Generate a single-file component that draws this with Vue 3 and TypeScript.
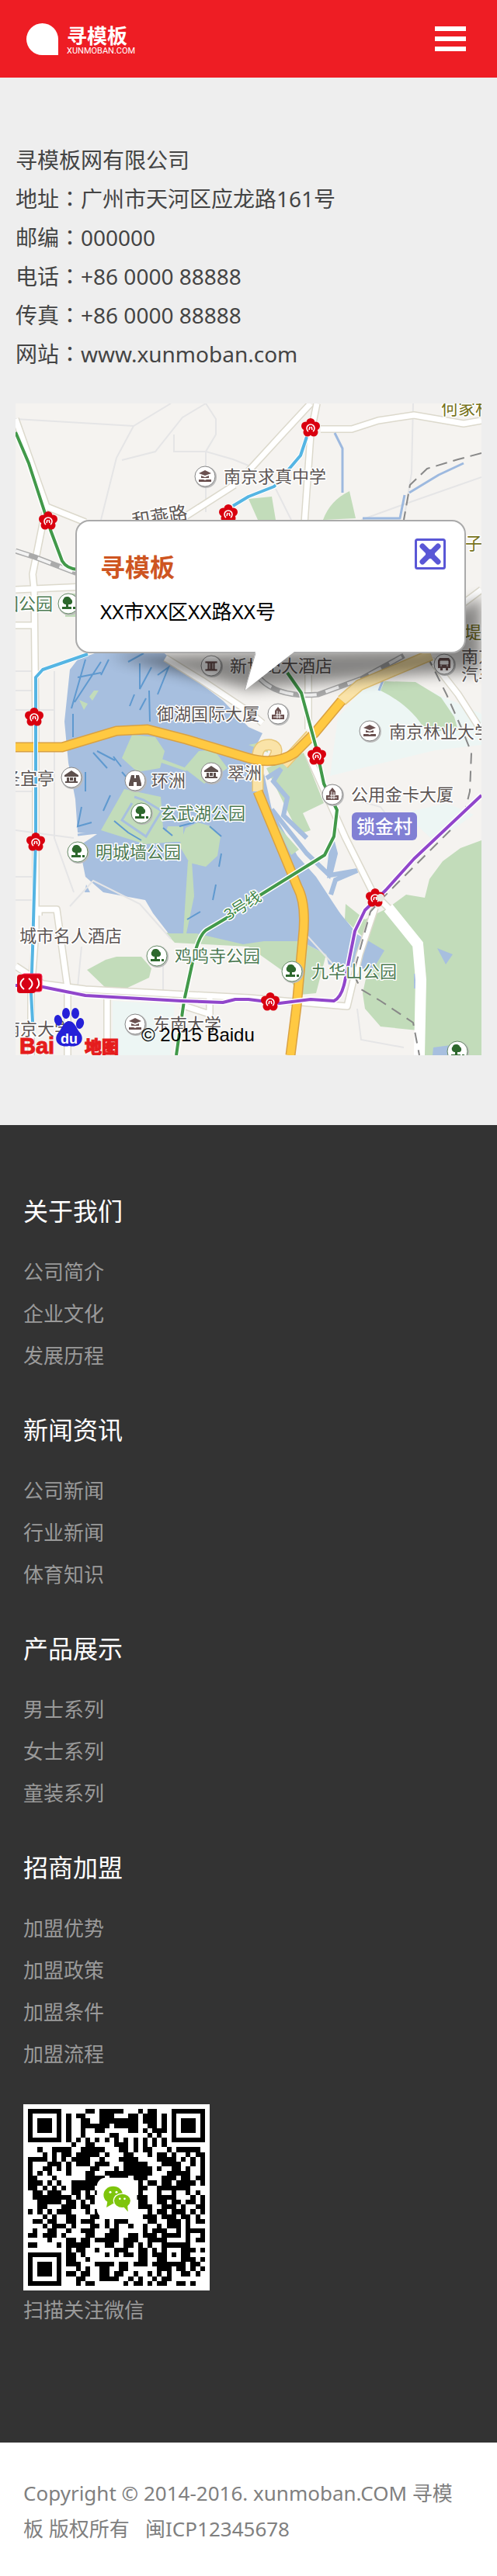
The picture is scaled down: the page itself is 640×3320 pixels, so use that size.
<script setup lang="ts">
import { ref } from 'vue'

interface Contact { label: string; value: string }
interface LinkGroup { title: string; links: string[] }
interface Poi { kind: string; x: number; y: number }
interface MapLabel { text: string; x: number; y: number; tone?: string; angle?: number }

const popupOpen = ref(true)
const menuOpen = ref(false)

const contacts: Contact[] = [
  { label: '地址', value: '广州市天河区应龙路161号' },
  { label: '邮编', value: '000000' },
  { label: '电话', value: '+86 0000 88888' },
  { label: '传真', value: '+86 0000 88888' },
  { label: '网站', value: 'www.xunmoban.com' },
]

const groups: LinkGroup[] = [
  { title: '关于我们', links: ['公司简介', '企业文化', '发展历程'] },
  { title: '新闻资讯', links: ['公司新闻', '行业新闻', '体育知识'] },
  { title: '产品展示', links: ['男士系列', '女士系列', '童装系列'] },
  { title: '招商加盟', links: ['加盟优势', '加盟政策', '加盟条件', '加盟流程'] },
]

const stations: number[][] = [
  [42, 151], [274, 142], [24, 404], [380, 31], [26, 565], [388, 454], [463, 637], [328, 771],
]

const pois: Poi[] = [
  { kind: 'school', x: 244, y: 94 }, { kind: 'hotel', x: 252, y: 338 },
  { kind: 'bus', x: 552, y: 336 }, { kind: 'tower', x: 338, y: 400 },
  { kind: 'school', x: 456, y: 422 }, { kind: 'hall', x: 72, y: 482 },
  { kind: 'view', x: 154, y: 486 }, { kind: 'hall', x: 252, y: 476 },
  { kind: 'park', x: 162, y: 528 }, { kind: 'park', x: 80, y: 578 },
  { kind: 'tower', x: 408, y: 504 }, { kind: 'park', x: 182, y: 712 },
  { kind: 'park', x: 356, y: 732 }, { kind: 'school', x: 154, y: 800 },
  { kind: 'park', x: 569, y: 835 }, { kind: 'park', x: 68, y: 258 },
]

const labels: MapLabel[] = [
  { text: '南京求真中学', x: 268, y: 94 },
  { text: '和燕路', x: 150, y: 152, angle: -9, tone: 'road' },
  { text: '新世纪大酒店', x: 276, y: 338 },
  { text: '御湖国际大厦', x: 182, y: 400 },
  { text: '南京林业大学', x: 481, y: 423 },
  { text: '圣宜亭', x: -16, y: 483 },
  { text: '环洲', x: 175, y: 486 },
  { text: '翠洲', x: 273, y: 476 },
  { text: '玄武湖公园', x: 186, y: 528, tone: 'park' },
  { text: '明城墙公园', x: 103, y: 578, tone: 'park' },
  { text: '公用金卡大厦', x: 432, y: 504 },
  { text: '城市名人酒店', x: 5, y: 686 },
  { text: '鸡鸣寺公园', x: 205, y: 712, tone: 'park' },
  { text: '九华山公园', x: 381, y: 732, tone: 'park' },
  { text: '东南大学', x: 177, y: 800 },
  { text: '南京大学', x: -16, y: 806 },
  { text: '国公园', x: -18, y: 258, tone: 'park' },
  { text: '3号线', x: 270, y: 660, tone: 'line', angle: -32 },
  { text: '何家村', x: 548, y: 6, tone: 'area' },
  { text: '子', x: 579, y: 180, tone: 'area' },
  { text: '堤锁', x: 578, y: 295, tone: 'area' },
  { text: '南京', x: 574, y: 326 },
  { text: '汽车', x: 574, y: 349 },
]

const casedRoads: string[] = [
  'M0 20L40 133L90 153', 'M38 140L22 220L24 240L26 420V680L20 760V840',
  'M0 240L90 236', 'M0 286H25', 'M215 148L282 105', 'M380 0L343 40L300 87',
  'M388 0L380 40L372 155', 'M393 33H433L467 22L513 15L577 26L600 22',
  'M193 328L240 357L300 397L318 412', 'M377 453L425 560L460 630L480 650L520 697L524 743L520 840',
  'M463 650L443 710L427 777L300 766L90 755L35 748L0 725', 'M30 660V652H53L67 753V840',
  'M118 765V840', 'M213 775L250 787V765', 'M600 240L560 270', 'M377 350V420',
  'M535 330L570 375L600 422',
]
const minorRoads: string[] = [
  'M0 20L152 29L200 0', 'M152 29L130 70L110 150', 'M137 73L180 62L215 18L245 0L258 20V40L245 62L280 72L300 80',
  'M204 40V62H245V140', 'M512 0L510 90L500 150', 'M335 110L355 150', 'M445 150L500 130L600 95',
  'M50 345V560L75 630', 'M0 500H30', 'M0 550L75 560', 'M0 610H30', 'M0 640H30',
  'M70 648L100 615L160 645L200 690', 'M85 700L80 752', 'M190 700L190 760',
  'M370 680L420 735', 'M440 780L445 820L500 830', 'M435 510L470 520L500 560', 'M0 345H25M0 370H25M0 395H50V345',
]

const qrRows: string[] = [
  '0000000000001101111100010110000000000', '0000000010110001110001101110100000000',
  '0000000010011001111111101110100000000', '0000000010011111101111100110100000000',
  '0000000010010011000001101011100000000', '0000000010010000011000000101000000000',
  '0000000010101010101010101010100000000', '0000000001001100001110101010100000000',
  '0010011110011111000110101100010111110', '0001010110111110100011000101101001011',
  '1111010101111001000111100001111010101', '1000111010111011100011111000111100101',
  '1001101010000110001011111101001101001', '1010100010001100111111111100011111001',
  '1100010000001111011110111000111011011', '1110101001111111000000010110110111101',
  '1101010101111100000000011001111111000', '0110111001101010000000010001001001010',
  '0111111110101100000000111001111000101', '0011111011010100000000011001101101101',
  '0011000111011000000000011100111010011', '1010101110001010000000000101101110101',
  '0001010011000110000000001110111011010', '0110110011011100101110000110011101011',
  '0001011101000110101001001001011101000', '0100110010011100011000001011100101111',
  '1101110100001100111001101110111101001', '0000100011011011111011100111100001011',
  '1100001011111000110011010100111111000', '0000000010110010001110011010100011101',
  '0000000011010000101011011011101011000', '0000000011001000000000011001111011101',
  '0000000011100011110110111011111110110', '0000000000101001100110000001110110101',
  '0000000011011001101100100101010011010', '0000000000110001111001010010110000000',
  '0000000000101100000010110101100110100',
]
const qrPath = qrRows
  .map((row, y) => [...row].map((cell, x) => (cell === '1' ? `M${x} ${y}h1v1h-1z` : '')).join(''))
  .join('')
</script>

<template>
  <div class="page">
    <header class="topbar">
      <a class="brand" href="#" aria-label="寻模板">
        <svg class="brand-mark" viewBox="0 0 41 41" aria-hidden="true">
          <path d="M20.500 0A20.500 20.500 0 0 1 41 20.500V41H20.500A20.500 20.500 0 0 1 20.500 0Z" fill="#fff" />
        </svg>
        <span class="brand-text">
          <strong>寻模板</strong>
          <small>XUNMOBAN.COM</small>
        </span>
      </a>
      <button class="menu" type="button" aria-label="菜单" :aria-expanded="menuOpen" @click="menuOpen = !menuOpen">
        <i></i><i></i><i></i>
      </button>
    </header>

    <main class="content">
      <section class="contact">
        <p>寻模板网有限公司</p>
        <p v-for="item in contacts" :key="item.label">{{ item.label }}<span class="colon">：</span>{{ item.value }}</p>
      </section>

      <section class="map">
        <svg class="map-art" viewBox="0 0 600 840" preserveAspectRatio="xMidYMid slice">
          <defs>
            <filter id="soft" x="-20%" y="-50%" width="140%" height="200%"><feGaussianBlur stdDeviation="9" /></filter>
            <g id="flower">
              <g fill="#d9000f">
                <circle cy="-6.500" r="5.500" /><circle cx="6.500" cy="-2" r="5.500" /><circle cx="4" cy="6" r="5.500" />
                <circle cx="-4" cy="6" r="5.500" /><circle cx="-6.500" cy="-2" r="5.500" /><circle r="6" />
              </g>
              <path d="M-3 5A5 5 0 1 1 3 5M-2 3L-1 -1M2 3L1 -1" fill="none" stroke="#fff" stroke-width="1.600" />
            </g>
            <g id="school"><path d="M-8 -4L0 -8L8 -4L0 -1ZM-5 -1L0 1L5 -1V2H-5ZM-8 4H-2L0 5L2 4H8V7H-8Z" fill="#6b5150" /></g>
            <g id="hotel"><path d="M-8 -6H8V-3H5V4H8V7H-8V4H-5V-3H-8ZM-2 -3V4M2 -3V4" fill="#6b5150" stroke="#fff" stroke-width=".8" /></g>
            <g id="bus"><path d="M-6 -8H6L8 -5V5H5V8H2V5H-2V8H-5V5H-8V-5Z" fill="#6b5150" /><path d="M-5 -4H5V0H-5ZM-5 2H-3M3 2H5" fill="#fff" stroke="#fff" /></g>
            <g id="tower"><path d="M-8 7V1H-4V-4L0 -9L4 -4V1H8V7Z" fill="#6b5150" /><path d="M-1 -4V6M2 -3V6M-6 4H6M-3 1H4" stroke="#fff" stroke-width="1" /></g>
            <g id="hall"><path d="M-9 -3L0 -9L9 -3V-1H-9ZM-6 0H-3V5H-6ZM3 0H6V5H3ZM-8 5H8V7H-8ZM-2 0H2V4H-2Z" fill="#5e504d" /></g>
            <g id="view"><path d="M-5 -7H-1V-3H1V-7H5L8 4V7H2V2H-2V7H-8V4Z" fill="#5e504d" /></g>
            <g id="park"><path d="M-2 -9C2 -9 3 -7 3 -6C6 -5 6 1 2 1H0V4H4V7H-8V4H-3V1C-8 1 -8 -5 -6 -6C-6 -8 -4 -9 -2 -9ZM6 4H9V7H6Z" fill="#2d682d" /></g>
          </defs>

          <rect width="600" height="840" fill="#f5f3f0" />
          <g fill="#edf6f4">
            <path d="M415 405L450 365L510 360L600 400V440L540 447L433 473L405 480Z" />
            <path d="M125 770L205 775L200 840H125Z" /><path d="M500 528L555 515L590 530L540 565Z" />
          </g>
          <g fill="#c2dcba">
            <path d="M300 123L330 120L335 150H312ZM396 150Q405 125 430 113L438 148Z" />
            <path d="M475 358L515 359L548 379L565 404L570 422H528Q510 390 470 370Z" />
            <path d="M600 563L573 573L550 590L533 613L527 637L503 633L480 650L450 665L425 645L424 665L460 700L447 760L450 780L470 803L518 808L520 840H600Z" />
            <path d="M323 470L371 450L397 515L370 528L380 550L365 555Z" />
            <path d="M116 717L130 713H162L175 728L172 740L140 755H118L92 730Z" />
            <path d="M64 245H82V275H64Z" />
            <path d="M193 682L250 683L320 693L367 693L400 710L387 760L367 762L345 732L300 700L205 695Z" />
          </g>
          <path d="M70 343L80 330L113 318H187L233 357L267 383L300 417L318 425L303 455L312 500L320 477L330 523L363 583L387 610L433 680L450 690L475 705L460 730L403 723L400 710L367 693H320L293 697L233 683H197L177 657L167 640L113 630L90 610L82 570L105 555L80 553L77 510L68 463L63 410Z" fill="#a7bfdf" />
          <path d="M323 483L342 471L332 487L350 508L345 531L375 560M330 523L375 580L403 607L408 565L412 580L405 608L440 602L412 614L406 633" fill="none" stroke="#a7bfdf" stroke-width="6" />
          <path d="M543 702L563 710L554 723ZM538 830L575 825V840H537ZM513 735H518V754H513ZM91 620L96 630H89Z" fill="#a7bfdf" />
          <g fill="#c2dcba">
            <path d="M150 427L180 430L192 448L186 470L157 475L137 457ZM217 470L236 448L255 446L273 470L243 490Z" />
            <path d="M140 497L187 507L190 548L205 565L167 568L110 550ZM196 545H216V565H190Z" />
            <path d="M219 547L235 540L252 545L264 558L260 583L245 597L224 592L211 570Z" />
            <path d="M222 590H227L230 635L220 683H216L219 635ZM188 458L220 470V474L185 462ZM82 382L93 387L88 395ZM101 370H107L99 383L95 378ZM300 440L325 435V450Z" />
            <path d="M334 540L365 575L355 582Z" />
          </g>
          <path d="M153 507L165 511L188 525L168 558L137 537L150 515M385 620L435 680M105 553L80 556" fill="none" stroke="#a7bfdf" stroke-width="3" />
          <path d="M80 353L110 347M110 333L76 385M90 330L72 393M120 330L110 350M145 333L165 322M160 335V368L175 340M183 350L197 340L183 375M172 370L173 410M153 375L147 390M168 380L160 395M74 400V430M100 450L118 470M105 448L128 460M126 455L136 468M137 475L150 490M85 520L80 545L98 540M113 525L122 505M127 538L145 553L162 563M190 547L202 557M211 545L230 540M250 545L265 558M265 580L262 597M258 620L254 640M221 665L238 655M90 475V500" fill="none" stroke="#5f99cf" stroke-width="2" />

          <g fill="none" stroke="#e5e5e6" stroke-width="2"><path v-for="d in minorRoads" :key="d" :d="d" /></g>
          <g fill="none" stroke="#dcd9cc" stroke-width="10" stroke-linejoin="round"><path v-for="d in casedRoads" :key="d" :d="d" /></g>
          <g fill="none" stroke="#fff" stroke-width="7" stroke-linejoin="round"><path v-for="d in casedRoads" :key="d" :d="d" /></g>
          <path d="M480 650L518 697L522 743L520 840" fill="none" stroke="#fff" stroke-width="14" />
          <g fill="none" stroke-linejoin="round">
            <path d="M0 190L25 198L90 223M315 355Q340 380 390 375L445 355L500 325" stroke="#aaa" stroke-width="7" />
            <path d="M0 190L25 198L90 223M315 355Q340 380 390 375L445 355L500 325" stroke="#f3f3f3" stroke-width="4" stroke-dasharray="18 12" />
            <path d="M600 64L570 72L530 84L508 105L500 150" stroke="#888" stroke-width="2" stroke-dasharray="15 8" />
            <path d="M530 325L555 375L575 420L587 450L585 500L580 520M560 550L475 635L457 655L435 735L445 755L470 770L512 798L520 840" stroke="#888" stroke-width="2" stroke-dasharray="14 9" />
            <path d="M411 38L421 58V115M447 148H495L501 118M507 115L545 92L577 77M468 370L475 352" stroke="#9db9df" stroke-width="3" />
            <path d="M312 500V462Q309 438 329 440Q342 443 331 460M345 465L380 427M420 383L443 363L535 324" stroke="#e8c779" stroke-width="15" />
            <path d="M312 500V462Q309 438 329 440Q342 443 331 460M345 465L380 427M420 383L443 363L535 324" stroke="#fae3a8" stroke-width="12" />
            <path d="M0 443H60L130 422L170 420L220 433L300 457Q335 467 360 450L385 425L420 383M312 500L363 623Q375 645 370 690L362 777L354 840" stroke="#d9a142" stroke-width="13" />
            <path d="M0 443H60L130 422L170 420L220 433L300 457Q335 467 360 450L385 425L420 383M312 500L363 623Q375 645 370 690L362 777L354 840" stroke="#ffc942" stroke-width="10" />
            <path d="M93 323L35 343L26 353V560L22 703L20 760L22 797M375 43L367 67L333 107L300 120L280 132" stroke="#fff" stroke-width="6" />
            <path d="M93 323L35 343L26 353V560L22 703L20 760L22 797M375 43L367 67L333 107L300 120L280 132" stroke="#55b5e3" stroke-width="4" />
            <path d="M0 37L17 77L45 163L60 203Q66 213 80 214M350 347L368 373L387 443L397 490L414 524L410 558L398 582L300 643L277 660L245 679Q235 687 228 720L217 770L207 840" stroke="#fff" stroke-width="7" />
            <path d="M0 37L17 77L45 163L60 203Q66 213 80 214M350 347L368 373L387 443L397 490L414 524L410 558L398 582L300 643L277 660L245 679Q235 687 228 720L217 770L207 840" stroke="#42994a" stroke-width="4" />
            <path d="M0 750L35 752L90 763L213 770L267 772L283 768H300L340 773L380 768L410 770Q420 765 424 745L437 680L450 653L477 627L513 587L600 505" stroke="#fff" stroke-width="7" />
            <path d="M0 750L35 752L90 763L213 770L267 772L283 768H300L340 773L380 768L410 770Q420 765 424 745L437 680L450 653L477 627L513 587L600 505" stroke="#9146cb" stroke-width="4" />
          </g>
          <g v-for="(s, i) in stations" :key="i" :transform="`translate(${s[0]} ${s[1]})`"><use href="#flower" /></g>
          <circle cx="470" cy="637" r="5" fill="#e8e8e0" />
          <rect x="8" y="735" width="26" height="23" rx="3" fill="#d70015" stroke="#f36" />
          <rect x="2" y="736" width="24" height="24" rx="4" fill="#d70015" />
          <path d="M11 741Q2 748 11 755M17 741Q26 748 17 755M28 741Q33 748 27 754" fill="none" stroke="#fff" stroke-width="2" />

          <g v-for="(p, i) in pois" :key="i" :transform="`translate(${p.x} ${p.y})`">
            <circle cx="1" cy="1" r="14" fill="#bbb" />
            <circle r="13" fill="#fff" :stroke="p.kind === 'park' ? '#668a66' : '#888'" stroke-width="1" />
            <use :href="'#' + p.kind" />
          </g>
          <text
            v-for="l in labels" :key="l.text + l.x" class="poi-label" :class="l.tone"
            :x="l.x" :y="l.y + 8" :transform="`rotate(${l.angle ?? 0} ${l.x} ${l.y})`"
          >{{ l.text }}</text>
          <rect x="433" y="527" width="84" height="36" rx="6" fill="#8180d4" />
          <text class="badge" x="439" y="554">锁金村</text>

          <path v-if="popupOpen" d="M120 325L300 368L510 350L600 345V250L560 270L530 315Z" fill="#000" opacity=".45" filter="url(#soft)" />

          <text class="baidu-red" x="5" y="838">Bai</text>
          <text class="baidu-cn" x="89" y="837">地图</text>
          <g fill="#2520d8">
            <ellipse cx="65" cy="786" rx="5" ry="7" /><ellipse cx="77" cy="786" rx="5" ry="7" />
            <ellipse cx="55" cy="795" rx="5" ry="7" transform="rotate(-15 55 795)" /><ellipse cx="83" cy="799" rx="5" ry="7" transform="rotate(15 83 799)" />
            <path d="M69 796C76 796 78 805 83 811C90 820 83 831 69 828C55 831 48 820 55 811C60 805 62 796 69 796Z" />
          </g>
          <text class="baidu-du" x="58" y="825">du</text>
        </svg>

        <div v-if="popupOpen" class="popup">
          <h2>寻模板</h2>
          <p>XX市XX区XX路XX号</p>
          <button class="close" type="button" aria-label="关闭" @click="popupOpen = false">
            <svg viewBox="0 0 40 40" aria-hidden="true">
              <rect x="1.500" y="1.500" width="37" height="37" rx="2" fill="#fff" stroke="#5a57d6" stroke-width="3" />
              <path d="M10 10L30 30M30 10L10 30" stroke="#5a57d6" stroke-width="7" stroke-linecap="round" />
              <circle cx="20" cy="20" r="6" fill="#5a57d6" />
            </svg>
          </button>
          <svg class="tail" viewBox="0 0 64 50" aria-hidden="true">
            <path d="M14 0H64L0 50Z" fill="#fff" /><path d="M14 2L0 50" stroke="#aaa" stroke-width="1" />
          </svg>
        </div>
        <small class="map-credit">© 2015 Baidu</small>
      </section>
    </main>

    <footer>
      <div class="sitemap">
        <nav v-for="group in groups" :key="group.title" :aria-label="group.title">
          <h3>{{ group.title }}</h3>
          <ul>
            <li v-for="link in group.links" :key="link"><a href="#">{{ link }}</a></li>
          </ul>
        </nav>
        <figure class="wechat">
          <svg viewBox="-1 -1 39 39" shape-rendering="crispEdges" role="img" aria-label="微信二维码">
            <rect x="-1" y="-1" width="39" height="39" fill="#fff" />
            <path :d="qrPath" fill="#000" />
            <g v-for="(f, i) in [[0, 0], [30, 0], [0, 30]]" :key="i" :transform="`translate(${f[0]} ${f[1]})`">
              <rect width="7" height="7" fill="#000" /><rect x="1" y="1" width="5" height="5" fill="#fff" /><rect x="2" y="2" width="3" height="3" fill="#000" />
            </g>
            <rect x="28" y="28" width="5" height="5" fill="#000" /><rect x="29" y="29" width="3" height="3" fill="#fff" /><rect x="30" y="30" width="1" height="1" fill="#000" />
            <g shape-rendering="geometricPrecision">
              <rect x="14.400" y="14.400" width="8.400" height="8.400" rx="1.800" fill="#fff" />
              <path d="M16.600 19.400L16.400 20.600L17.800 19.800Z" fill="#7ec50c" /><ellipse cx="17.800" cy="18" rx="2" ry="1.800" fill="#7ec50c" />
              <ellipse cx="19.700" cy="19.200" rx="1.900" ry="1.600" fill="#fff" /><path d="M20 20.500L20.900 21.500L20.800 20Z" fill="#7ec50c" />
              <ellipse cx="19.700" cy="19.200" rx="1.700" ry="1.400" fill="#7ec50c" />
              <g fill="#fff"><circle cx="17.200" cy="17.400" r=".25" /><circle cx="18.500" cy="17.400" r=".25" /><circle cx="19.200" cy="18.800" r=".22" /><circle cx="20.200" cy="18.800" r=".22" /></g>
            </g>
          </svg>
          <figcaption>扫描关注微信</figcaption>
        </figure>
      </div>
      <p class="copyright">Copyright © 2014-2016. xunmoban.COM 寻模板 版权所有 &nbsp; 闽ICP12345678</p>
    </footer>
  </div>
</template>

<style>
body { background: #fff; }
</style>

<style scoped>
* { box-sizing: border-box; }
.page { font-family: "Noto Sans", "Noto Sans CJK SC", sans-serif; color: #444; }
p, h2, h3, ul, figure { margin: 0; padding: 0; font-weight: 400; }
a { color: inherit; text-decoration: none; }
button { border: 0; padding: 0; background: none; cursor: pointer; }

.topbar { display: flex; align-items: center; justify-content: space-between; height: 100px; padding: 0 40px 0 34px; background: #ee1d24; }
.brand { display: flex; align-items: center; gap: 11px; color: #fff; }
.brand-mark { width: 41px; height: 41px; }
.brand-text { display: flex; flex-direction: column; padding-top: 4px; }
.brand-text strong { font-size: 26px; line-height: 28px; font-weight: 700; }
.brand-text small { font-family: Roboto, sans-serif; font-size: 11px; line-height: 12px; }
.menu { display: flex; flex-direction: column; gap: 7px; width: 40px; }
.menu i { height: 6px; background: #fff; }

.content { padding: 81px 20px 90px; background: #eee; }
.contact { margin-bottom: 39px; font-size: 28px; line-height: 50px; }
.colon { font-family: "Noto Sans CJK TC", sans-serif; line-height: 1; }

.map { position: relative; aspect-ratio: 5 / 7; overflow: hidden; }
.map-art { display: block; width: 100%; height: 100%; }
.poi-label { font-size: 22px; fill: #5d5654; stroke: #fff; stroke-width: 3px; paint-order: stroke; stroke-linejoin: round; }
.poi-label.park { fill: #4c7a52; }
.poi-label.line { fill: #42864a; font-size: 20px; }
.poi-label.area { fill: #77731c; }
.poi-label.road { font-size: 24px; }
.badge { font-size: 24px; fill: #fff; font-weight: 500; }
.baidu-red { font: 700 29px "Liberation Sans", sans-serif; fill: #e51c1c; stroke: #e51c1c; stroke-width: 1px; }
.baidu-cn { font-size: 22px; font-weight: 900; fill: #e51c1c; stroke: #e51c1c; stroke-width: 1px; }
.baidu-du { font: 700 18px "Liberation Sans", sans-serif; fill: #fff; }

.popup { position: absolute; left: 77px; right: 20px; top: 150px; padding: 29px 30px; background: #fff; border: 2px solid #aaa; border-radius: 18px; color: #000; }
.popup h2 { margin-bottom: 4px; color: #ce5521; font-size: 32px; line-height: 60px; font-weight: 700; }
.popup p { font-size: 26px; line-height: 46px; }
.close { position: absolute; top: 22px; right: 24px; width: 40px; height: 40px; }
.close svg { display: block; width: 100%; }
.tail { position: absolute; left: 216px; top: 100%; width: 64px; height: 50px; }
.map-credit { position: absolute; left: 162px; bottom: 12px; font: 24px/28px "Liberation Sans", sans-serif; color: #000; }

.sitemap { padding: 75px 30px 146px; background: #333; color: #9a9a9a; font-size: 26px; line-height: 54px; }
.sitemap nav { margin-bottom: 18px; }
.sitemap h3 { margin-bottom: 15px; color: #fff; font-size: 32px; line-height: 72px; }
.sitemap nav + nav { padding-top: 15px; }
.sitemap ul { list-style: none; }
.wechat { padding-top: 20px; }
.wechat svg { display: block; width: 240px; height: 240px; }
.wechat figcaption { line-height: 50px; }
.copyright { padding: 42px 40px 38px 30px; background: #fff; color: #808080; font-size: 26px; line-height: 46px; }
</style>
